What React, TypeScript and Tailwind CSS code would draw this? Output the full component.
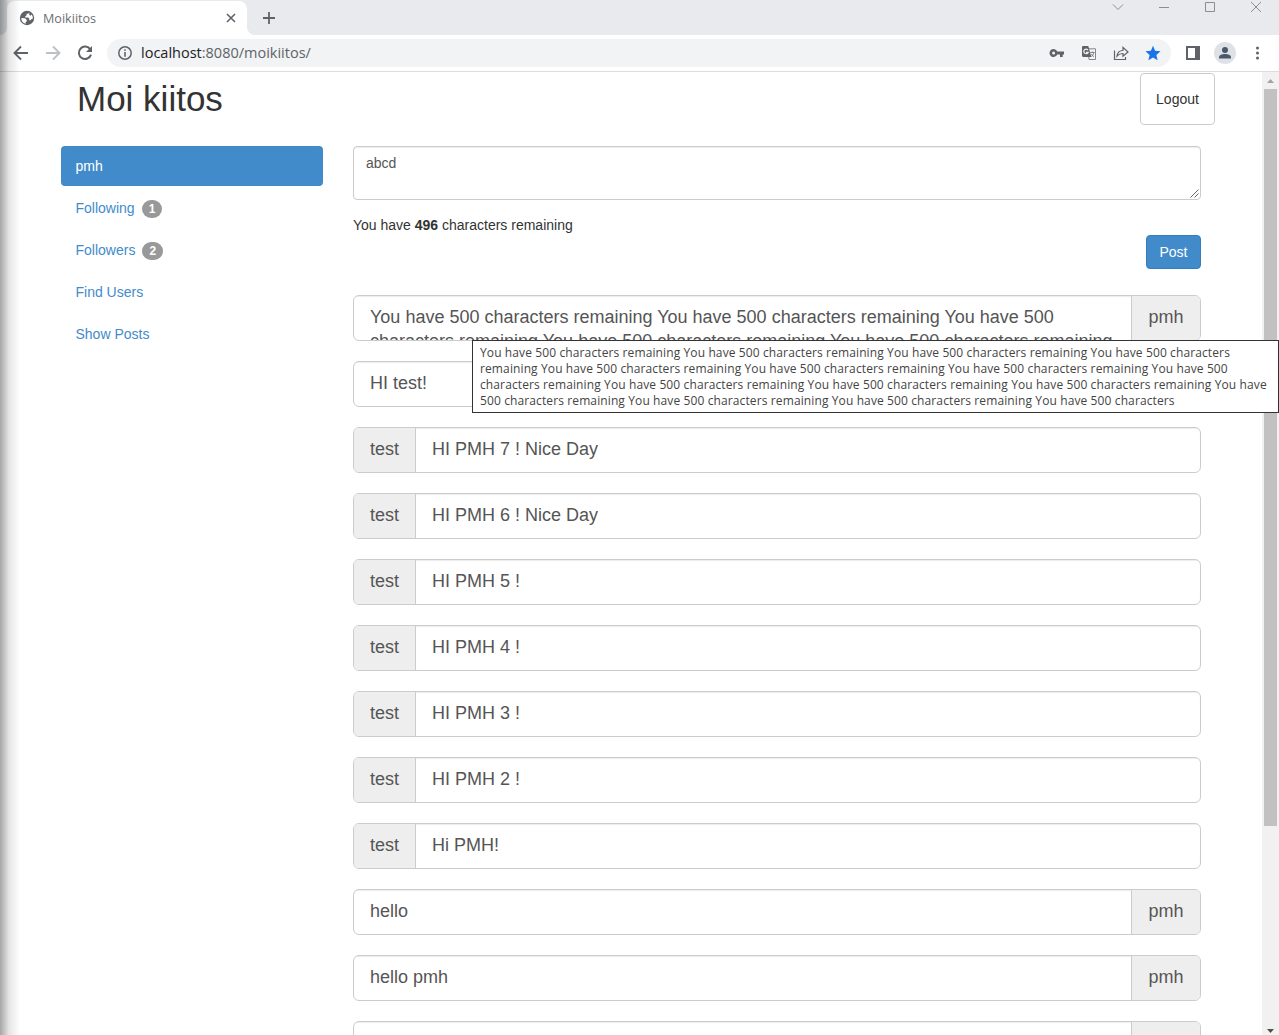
import React from "react";

type Post = { text: string; who: string; mine: boolean };

const LONG =
  "You have 500 characters remaining You have 500 characters remaining You have 500 characters remaining You have 500 characters remaining You have 500 characters remaining";

const POSTS: Post[] = [
  { text: LONG, who: "pmh", mine: true },
  { text: "HI test!", who: "pmh", mine: true },
  { text: "HI PMH 7 ! Nice Day", who: "test", mine: false },
  { text: "HI PMH 6 ! Nice Day", who: "test", mine: false },
  { text: "HI PMH 5 !", who: "test", mine: false },
  { text: "HI PMH 4 !", who: "test", mine: false },
  { text: "HI PMH 3 !", who: "test", mine: false },
  { text: "HI PMH 2 !", who: "test", mine: false },
  { text: "Hi PMH!", who: "test", mine: false },
  { text: "hello", who: "pmh", mine: true },
  { text: "hello pmh", who: "pmh", mine: true },
  { text: "", who: "", mine: true },
];

const TOOLTIP_LINES = [
  "You have 500 characters remaining You have 500 characters remaining You have 500 characters remaining You have 500 characters",
  "remaining You have 500 characters remaining You have 500 characters remaining You have 500 characters remaining You have 500",
  "characters remaining You have 500 characters remaining You have 500 characters remaining You have 500 characters remaining You have",
  "500 characters remaining You have 500 characters remaining You have 500 characters remaining You have 500 characters",
];

function TabStrip() {
  return (
    <div className="flex h-[35px] shrink-0 bg-[#e8eaed]">
      <div className="w-[7px] bg-white">
        <div className="h-[35px] rounded-br-lg bg-[#dee1e6]" />
      </div>
      <div className="mt-px flex h-[34px] w-[240px] items-center rounded-t-lg bg-white pl-3 pr-[10px]">
        <svg className="size-4 shrink-0" viewBox="0 0 16 16">
          <circle cx="8" cy="8" r="7.2" fill="#5f6368" />
          <path
            d="M10.200 2.700 9 3.800H7.600v1.400L6.200 6.400v1.200h3l1 1v1.700h1.300l.9-1 1.400-.5A5.600 5.600 0 0 0 12.700 4.600l-1.400 1.200-1-1zM2.300 8 6 8.300l1.800 1.800v1.100L6.700 12v1.800A5.900 5.900 0 0 1 2.300 8Z"
            fill="#fff"
          />
        </svg>
        <span className="ml-2 flex-1 pt-px font-['Open_Sans',sans-serif] text-[12.6px] leading-4 text-[#6b6e73]">Moikiitos</span>
        <svg className="size-3" viewBox="0 0 12 12" stroke="#5f6368" strokeWidth="1.6">
          <path d="m2 2 8 8M10 2l-8 8" />
        </svg>
      </div>
      <div className="w-2 bg-white">
        <div className="h-[35px] rounded-bl-lg bg-[#e8eaed]" />
      </div>
      <svg className="ml-[6px] mt-[10px] size-4" viewBox="0 0 16 16" stroke="#5f6368" strokeWidth="1.8">
        <path d="M8 2v12M2 8h12" />
      </svg>
      <div className="ml-auto flex items-start gap-[34px] pr-[17px] pt-px">
        {["m1 3.500 5 5 5-5", "M1 6.500h10", "M1.500 1.500h9v9h-9z", "m1 1 10 10M11 1l-10 10"].map((d) => (
          <svg key={d} className="h-3 w-3" viewBox="0 0 12 12" fill="none" stroke="#8b8d91">
            <path d={d} />
          </svg>
        ))}
      </div>
    </div>
  );
}

function Toolbar() {
  return (
    <div className="flex h-[37px] shrink-0 items-center border-b border-[#dadce0] bg-white">
      <svg className="ml-[13px] size-4" viewBox="0 0 16 16" fill="none" stroke="#5f6368" strokeWidth="1.9">
        <path d="M15 8H2M8 1.500 1.500 8 8 14.500" />
      </svg>
      <svg className="ml-4 size-4" viewBox="0 0 16 16" fill="none" stroke="#bdc1c6" strokeWidth="1.9">
        <path d="M1 8h13M8 1.500 14.500 8 8 14.500" />
      </svg>
      <svg className="ml-4 size-4" viewBox="0 0 16 16">
        <path d="M13.300 4.400A6.200 6.200 0 1 0 14 9.600" fill="none" stroke="#5f6368" strokeWidth="2" />
        <path d="M15 1v6H9z" fill="#5f6368" />
      </svg>
      <div className="ml-[14px] flex h-7 w-[1064px] items-center rounded-full bg-[#f1f3f4] pl-[11px] pr-[10px]">
        <svg className="size-[14px]" viewBox="0 0 14 14">
          <circle cx="7" cy="7" r="6.200" fill="none" stroke="#5f6368" strokeWidth="1.500" />
          <path d="M6.200 3.200h1.600v1.600H6.200zM6.200 6h1.600v4.800H6.200z" fill="#5f6368" />
        </svg>
        <span className="ml-[9px] font-['Open_Sans',sans-serif] text-[14.5px] leading-5 text-[#5f6368]">
          <span className="text-[#202124]">localhost</span>:8080/moikiitos/
        </span>
        <div className="ml-auto flex items-center gap-4">
          <svg className="size-4" viewBox="0 0 16 16">
            <path
              fillRule="evenodd"
              d="M8.200 6.500A4 4 0 1 0 8.200 9.500H11V12h2.700V9.500H15v-3zM4.600 6.500a1.500 1.500 0 1 1 0 3 1.500 1.500 0 0 1 0-3Z"
              fill="#5f6368"
            />
          </svg>
          <svg className="size-4" viewBox="0 0 16 16">
            <path d="M7 3.800h7.500v10.700H8z" fill="#f1f3f4" stroke="#85888c" />
            <path d="M2 1h5.300l3 11H2.300A1.300 1.300 0 0 1 1 11V2a1 1 0 0 1 1-1Z" fill="#5f6368" />
            <path d="M6.900 5A2.300 2.300 0 1 0 7.200 7.400H5" fill="none" stroke="#f1f3f4" strokeWidth="1.200" />
            <path d="M9.200 7.500h4.500M11.400 6.500v1M12.800 7.500c-.4 2-1.300 3.300-2.500 4M10.300 9c.6 1.200 1.500 2 2.700 2.700" fill="none" stroke="#777a7e" strokeWidth=".9" />
          </svg>
          <svg className="size-4" viewBox="0 0 16 16" fill="none" stroke="#5f6368" strokeWidth="1.200">
            <path d="M1.500 5.500v9h11V12" />
            <path d="M4 11c.4-3.500 2.700-5.500 6-5.500V2.400L15 7l-5 4.200V8.500C7.500 8.500 5.500 9.200 4 11Z" />
          </svg>
          <svg className="size-4" viewBox="0 0 16 16">
            <path d="m8 .8 2.100 5 5.400.5-4.100 3.600 1.200 5.300L8 12.400l-4.600 2.800 1.200-5.300L.5 6.300l5.400-.5z" fill="#1a73e8" />
          </svg>
        </div>
      </div>
      <svg className="ml-[15px] size-[14px]" viewBox="0 0 14 14">
        <path d="M1 1h12v12H1z" fill="white" stroke="#5f6368" strokeWidth="2" />
        <path d="M9 0h5v14H9z" fill="#5f6368" />
      </svg>
      <svg className="ml-[14px] size-[22px]" viewBox="0 0 22 22">
        <circle cx="11" cy="11" r="11" fill="#dee1e6" />
        <circle cx="11" cy="7.900" r="3" fill="#4b576b" />
        <path d="M5 16.500v-1.300c0-2 3.200-3.200 6-3.200s6 1.200 6 3.200v1.300z" fill="#4b576b" />
      </svg>
      <svg className="ml-5 h-[14px] w-1" viewBox="0 0 4 14" fill="#5f6368">
        <circle cx="1.500" cy="2" r="1.500" />
        <circle cx="1.500" cy="7" r="1.500" />
        <circle cx="1.500" cy="12" r="1.500" />
      </svg>
    </div>
  );
}

function Badge({ n }: { n: number }) {
  return (
    <span className="ml-[7px] mt-px flex h-[18px] min-w-[20px] items-center justify-center rounded-[10px] bg-[#999] px-[7px] text-xs font-bold leading-3 text-white">
      {n}
    </span>
  );
}

function Sidebar() {
  return (
    <nav className="flex w-[262px] shrink-0 flex-col gap-[2px] text-sm leading-5 text-[#428bca]">
      <a className="flex h-10 items-center rounded bg-[#428bca] px-[14.5px] text-white">pmh</a>
      <a className="flex h-10 items-center px-[14.5px]">
        Following
        <Badge n={1} />
      </a>
      <a className="flex h-10 items-center px-[14.5px]">
        Followers
        <Badge n={2} />
      </a>
      <a className="flex h-10 items-center px-[14.5px]">Find Users</a>
      <a className="flex h-10 items-center px-[14.5px]">Show Posts</a>
    </nav>
  );
}

function PostRow({ post }: { post: Post }) {
  return (
    <div className="flex h-[46px] shrink-0 overflow-hidden rounded-md border border-[#ccc] text-lg leading-6 text-[#555]">
      {!post.mine && (
        <div className="flex w-[62px] shrink-0 justify-center border-r border-[#ccc] bg-[#eee] pt-[9px]">{post.who}</div>
      )}
      <div className="h-11 flex-1 overflow-hidden px-4 pt-[9px] shadow-[inset_0_1px_1px_rgba(0,0,0,0.075)]">{post.text}</div>
      {post.mine && (
        <div className="flex w-[69px] shrink-0 justify-center border-l border-[#ccc] bg-[#eee] pt-[9px]">{post.who}</div>
      )}
    </div>
  );
}

function Composer() {
  return (
    <div className="flex flex-col text-sm leading-5">
      <div className="relative h-[54px] rounded border border-[#ccc] px-3 py-[6px] text-[#555] shadow-[inset_0_1px_1px_rgba(0,0,0,0.075)]">
        abcd
        <svg className="absolute bottom-0 right-0 size-[10px]" viewBox="0 0 10 10" stroke="#555" strokeWidth=".9">
          <path d="m.5 8.500 8-8M4.500 8.500l4-4" />
        </svg>
      </div>
      <p className="mt-[15px] text-[#333]">
        You have <b>496</b> characters remaining
      </p>
      <button className="h-[34px] w-[55px] self-end rounded border border-[#357ebd] bg-[#428bca] text-white">Post</button>
    </div>
  );
}

function Scrollbar() {
  return (
    <div className="flex w-[17px] shrink-0 flex-col items-center bg-[#f1f1f1]">
      <svg className="h-[17px] w-[17px] shrink-0" viewBox="0 0 17 17" fill="#a3a3a3">
        <path d="M5 11h7L8.500 7z" />
      </svg>
      <div className="h-[737px] w-[13px] shrink-0 bg-[#c1c1c1]" />
      <svg className="mt-auto h-[13px] w-[17px] shrink-0" viewBox="0 0 17 13" fill="#505050">
        <path d="M5 7h7l-3.500 4z" />
      </svg>
    </div>
  );
}

export default function App() {
  return (
    <div className="relative flex h-[1035px] w-[1279px] flex-col overflow-hidden bg-white font-['Liberation_Sans',sans-serif]">
      <TabStrip />
      <Toolbar />
      <div className="flex min-h-0 flex-1">
        <div className="flex min-w-0 flex-1 flex-col overflow-hidden">
          <header className="flex h-[74px] shrink-0 items-start justify-between pl-[77px] pr-[47px] pt-px">
            <h1 className="mt-[6px] text-[35px] leading-10 text-[#333]">Moi kiitos</h1>
            <button className="h-[52px] w-[75px] rounded border border-[#ccc] text-sm text-[#333]">Logout</button>
          </header>
          <div className="flex min-h-0 gap-[30px] pl-[61px] pr-[61px]">
            <Sidebar />
            <main className="flex min-w-0 flex-1 flex-col">
              <Composer />
              <div className="mt-[26px] flex flex-col gap-5">
                {POSTS.map((p, i) => (
                  <PostRow key={i} post={p} />
                ))}
              </div>
            </main>
          </div>
        </div>
        <Scrollbar />
      </div>
      <div className="absolute left-[472px] top-[340px] h-[73px] w-[807px] border border-[#333] bg-white pl-[7px] pt-1 font-['Open_Sans',sans-serif] text-[12px] leading-4 tracking-[0.114px] text-[#444]">
        {TOOLTIP_LINES.map((l) => (
          <div key={l} className="whitespace-nowrap">
            {l}
          </div>
        ))}
      </div>
      <div className="pointer-events-none absolute inset-y-0 left-0 w-5 bg-linear-to-r from-black/35 via-black/10 via-45% to-transparent" />
    </div>
  );
}
